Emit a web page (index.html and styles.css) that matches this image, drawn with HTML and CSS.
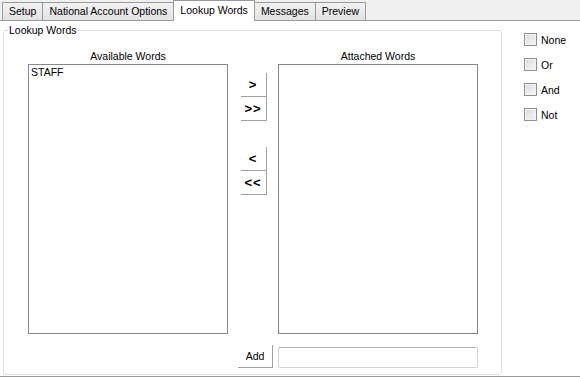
FILE: index.html
```html
<!DOCTYPE html>
<html lang="en">
<head>
    <meta charset="UTF-8">
    <title>Lookup Words</title>
    <link rel="stylesheet" href="styles.css">
</head>
<body>
    <div class="tabs">
        <div class="tab">Setup</div>
        <div class="tab">National Account Options</div>
        <div class="tab active">Lookup Words</div>
        <div class="tab">Messages</div>
        <div class="tab">Preview</div>
    </div>
    <div class="page">
        <fieldset class="group">
            <legend>Lookup Words</legend>
            <div class="lists">
                <div class="col">
                    <div class="caption">Available Words</div>
                    <div class="listbox">
                        <div class="item">STAFF</div>
                    </div>
                </div>
                <div class="moves">
                    <div class="btn-pair">
                        <button class="move">&gt;</button>
                        <button class="move">&gt;&gt;</button>
                    </div>
                    <div class="btn-pair">
                        <button class="move">&lt;</button>
                        <button class="move">&lt;&lt;</button>
                    </div>
                </div>
                <div class="col">
                    <div class="caption">Attached Words</div>
                    <div class="listbox"></div>
                </div>
            </div>
            <div class="add-row">
                <button class="add">Add</button>
                <input type="text" class="word-input">
            </div>
        </fieldset>
        <div class="options">
            <label class="opt"><span class="box"></span>None</label>
            <label class="opt"><span class="box"></span>Or</label>
            <label class="opt"><span class="box"></span>And</label>
            <label class="opt"><span class="box"></span>Not</label>
        </div>
    </div>
</body>
</html>
```

FILE: styles.css
```css
body {
    margin: 0;
    font-family: "Liberation Sans", Arial, sans-serif;
    font-size: 10.5px;
    color: #000;
    background: #f0f0f0;
    width: 580px;
    height: 377px;
    overflow: hidden;
}
.tabs {
    display: flex;
    align-items: flex-end;
    height: 20px;
    padding-left: 2px;
    border-bottom: 1px solid #9a9a9a;
    background: #f0f0f0;
}
.tab {
    height: 18px;
    line-height: 16px;
    padding: 0 6px;
    border: 1px solid #9a9a9a;
    border-bottom: none;
    background: linear-gradient(#f2f2f2, #e3e3e3);
    box-sizing: border-box;
}
.tab + .tab {
    margin-left: -1px;
}
.tab.active {
    height: 21px;
    line-height: 18px;
    margin-bottom: -1px;
    background: #fff;
    padding: 0 6px;
    position: relative;
    z-index: 1;
}
.page {
    display: flex;
    background: #fff;
    height: 356px;
    border-bottom: 1px solid #9a9a9a;
    padding: 3px 0 0 3px;
    box-sizing: border-box;
}
.group {
    margin: 0;
    padding: 0 0 0 24px;
    width: 499px;
    height: 351px;
    box-sizing: border-box;
    border: 1px solid #d5dfe5;
    border-radius: 3px;
}
.group legend {
    padding: 0 1px;
    margin-left: -20px;
    line-height: 13px;
}
.lists {
    display: flex;
    margin-top: 13px;
}
.col {
    width: 200px;
    display: flex;
    flex-direction: column;
}
.caption {
    text-align: center;
    height: 14px;
    line-height: 13px;
}
.listbox {
    height: 270px;
    border: 1px solid #828790;
    box-sizing: border-box;
    padding: 1px 2px;
}
.item {
    line-height: 13px;
}
.moves {
    width: 50px;
    display: flex;
    flex-direction: column;
    align-items: center;
    padding-top: 23px;
    gap: 26px;
}
.btn-pair {
    display: flex;
    flex-direction: column;
    padding-left: 1px;
}
button {
    font-family: inherit;
    font-size: 10.5px;
}
.move {
    width: 26px;
    height: 24px;
    padding: 0;
    border: none;
    border-right: 1px solid #a0a0a0;
    border-bottom: 1px solid #a0a0a0;
    background: #fff;
    font-weight: bold;
    font-size: 13px;
    line-height: 20px;
    letter-spacing: 1px;
    text-align: center;
}
.add-row {
    display: flex;
    align-items: flex-end;
    margin-top: 11px;
    padding-left: 210px;
}
.add {
    width: 35px;
    height: 23px;
    padding: 0;
    margin-right: 5px;
    border: none;
    border-right: 1px solid #a0a0a0;
    border-bottom: 1px solid #a0a0a0;
    background: #fff;
}
.word-input {
    width: 200px;
    height: 21px;
    box-sizing: border-box;
    border: 1px solid #d0d4d8;
    border-top-color: #aeb2b6;
    border-radius: 2px;
    margin: 0;
}
.options {
    display: flex;
    flex-direction: column;
    padding: 9px 0 0 22px;
    gap: 12px;
}
.opt {
    display: flex;
    align-items: center;
    height: 13px;
    gap: 4px;
}
.box {
    width: 13px;
    height: 13px;
    box-sizing: border-box;
    border: 1px solid #8f8f8f;
    background: linear-gradient(135deg, #dcdcdc, #f6f6f6);
    box-shadow: inset 0 0 0 1px #f4f4f4;
}
```
